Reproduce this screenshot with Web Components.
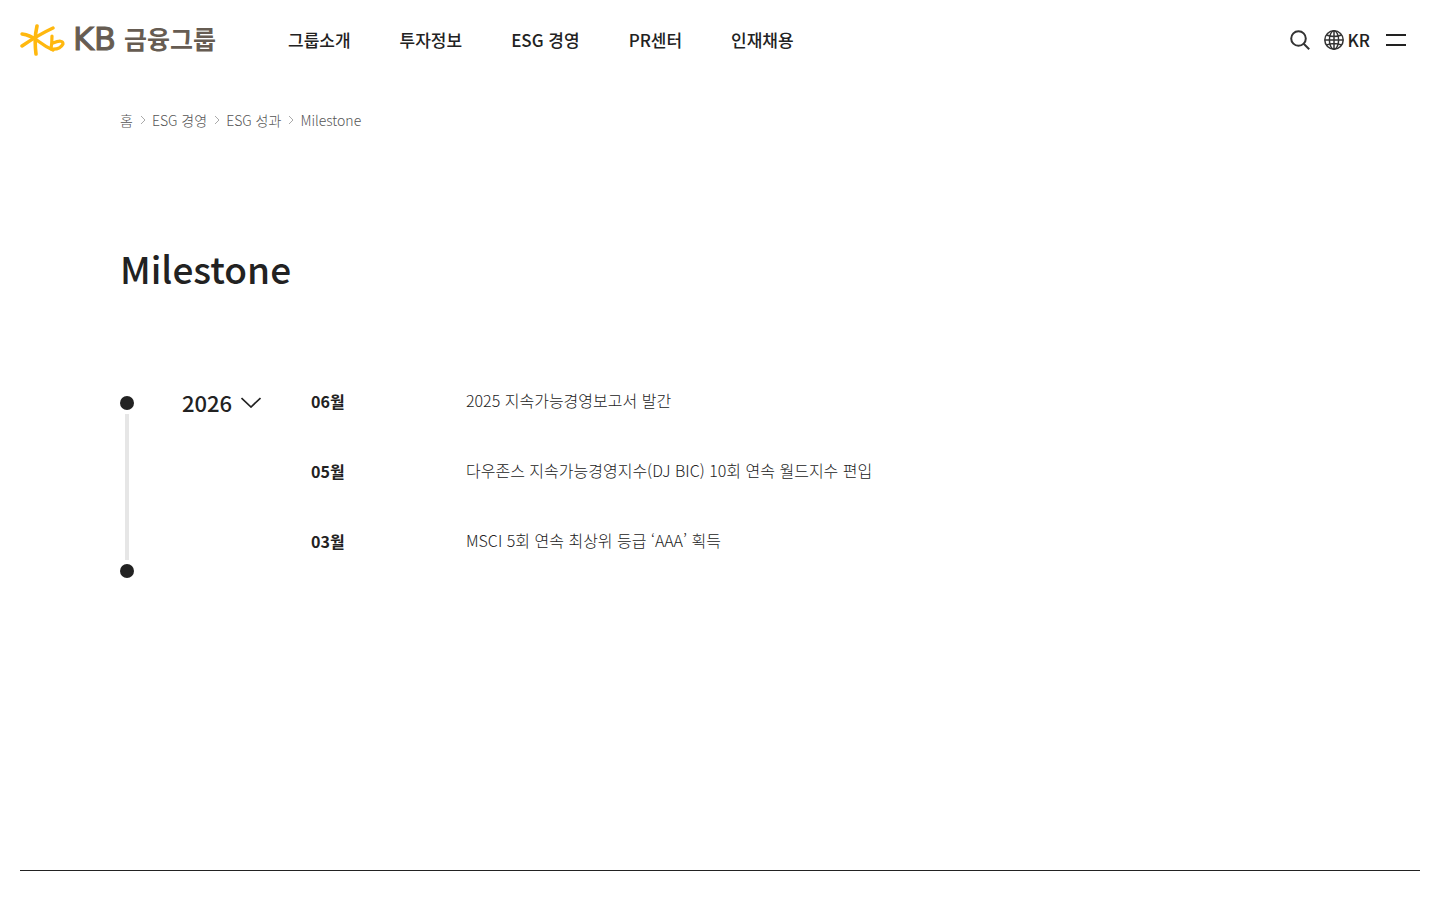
<!DOCTYPE html>
<html lang="ko">
<head>
<meta charset="utf-8">
<meta name="viewport" content="width=device-width, initial-scale=1">
<title>Milestone | KB금융그룹</title>
<style>
  body { margin: 0; background: #fff; color: #222; font-family: "Noto Sans CJK KR", "Noto Sans", sans-serif; }
</style>
</head>
<body>
<kb-header>
  <kb-logo slot="logo"></kb-logo>
  <kb-nav-link href="#group">그룹소개</kb-nav-link>
  <kb-nav-link href="#ir">투자정보</kb-nav-link>
  <kb-nav-link href="#esg">ESG 경영</kb-nav-link>
  <kb-nav-link href="#pr">PR센터</kb-nav-link>
  <kb-nav-link href="#career">인재채용</kb-nav-link>
</kb-header>
<kb-page heading="Milestone">
  <kb-breadcrumb slot="path">
    <kb-crumb href="#home">홈</kb-crumb>
    <kb-crumb href="#esg">ESG 경영</kb-crumb>
    <kb-crumb href="#result">ESG 성과</kb-crumb>
    <kb-crumb href="#milestone">Milestone</kb-crumb>
  </kb-breadcrumb>
  <kb-timeline year="2026">
    <kb-event month="06월">2025 지속가능경영보고서 발간</kb-event>
    <kb-event month="05월">다우존스 지속가능경영지수(DJ BIC) 10회 연속 월드지수 편입</kb-event>
    <kb-event month="03월">MSCI 5회 연속 최상위 등급 ‘AAA’ 획득</kb-event>
  </kb-timeline>
</kb-page>
<kb-footer></kb-footer>
<script>
  const define = (name, markup, setup) => {
    const template = document.createElement('template');
    template.innerHTML = markup;
    customElements.define(name, class extends HTMLElement {
      constructor() {
        super();
        this.attachShadow({ mode: 'open' }).append(template.content.cloneNode(true));
      }
      connectedCallback() { if (setup) setup(this, this.shadowRoot); }
    });
  };

  define('kb-logo', `
    <style>
      :host { display: block; width: 196px; }
      a { display: flex; align-items: flex-start; color: #665c52; text-decoration: none; line-height: 32px; white-space: nowrap; }
      svg { width: 46px; height: 32px; margin-right: 7px; }
      .kb { font-family: "DejaVu Sans", sans-serif; font-size: 32px; line-height: 30px; margin-right: 8px; -webkit-text-stroke: 1px #665c52; }
      .ko { font-family: "Noto Sans CJK KR", sans-serif; font-size: 25px; font-weight: 700; line-height: 28px; }
    </style>
    <a href="#home">
      <svg viewBox="0 0 46 32" fill="none" stroke="#ffb80f" stroke-linecap="round" stroke-linejoin="round" aria-hidden="true">
        <path d="M17 2Q14 14 16 30" stroke-width="3.6"/>
        <path d="M2 10Q10 11 18 17Q26 23 33 26" stroke-width="3.4"/>
        <path d="M33 4Q18 11 2 22" stroke-width="3.4"/>
        <path d="M32 12Q32 19 31 25Q40 26 43 20Q43 15 33 19" stroke-width="3.2"/>
      </svg>
      <span class="kb">KB</span><span class="ko">금융그룹</span>
    </a>`);

  define('kb-nav-link', `
    <style>
      :host { display: block; }
      a { color: #222; text-decoration: none; font-size: 17px; font-weight: 500; line-height: 24px; white-space: nowrap; }
    </style>
    <a><slot></slot></a>`,
    (host, root) => root.querySelector('a').setAttribute('href', host.getAttribute('href')));

  define('kb-header', `
    <style>
      :host { display: block; }
      header { display: flex; align-items: center; height: 80px; padding: 0 34px 0 20px; }
      nav { display: flex; gap: 49px; margin-left: 72px; }
      .tools { display: flex; align-items: center; margin-left: auto; }
      button { display: flex; align-items: center; gap: 4px; padding: 0; border: 0; background: none; color: #222; font: 500 17px/24px "Noto Sans CJK KR", sans-serif; cursor: pointer; }
      .lang { margin: 0 16px 0 14px; }
      svg { width: 20px; height: 20px; fill: none; stroke: #333; }
    </style>
    <header>
      <slot name="logo"></slot>
      <nav aria-label="주 메뉴"><slot></slot></nav>
      <div class="tools">
        <button aria-label="검색"><svg viewBox="0 0 20 20" stroke-width="2"><circle cx="8.5" cy="8.5" r="7.3"/><path d="M13.7 13.7L19.2 19.2"/></svg></button>
        <button class="lang"><svg viewBox="0 0 20 20" stroke-width="1.5"><circle cx="10" cy="10" r="9.2"/><ellipse cx="10" cy="10" rx="4.6" ry="9.2"/><path d="M10 1V19M1 10H19M2.5 5Q10 8 17.5 5M2.5 15Q10 12 17.5 15"/></svg>KR</button>
        <button aria-label="전체 메뉴"><svg viewBox="0 0 20 20" stroke-width="2"><path d="M0 5H20M0 15H20" stroke="#222"/></svg></button>
      </div>
    </header>`);

  define('kb-crumb', `
    <style>
      :host { display: flex; align-items: center; }
      a { color: #555; text-decoration: none; font-size: 14px; font-weight: 300; line-height: 20px; white-space: nowrap; }
      svg { width: 6px; height: 10px; margin: 0 6px 0 7px; fill: none; stroke: #aaa; }
      :host(:last-child) svg { display: none; }
    </style>
    <a><slot></slot></a><svg viewBox="0 0 6 10" aria-hidden="true"><path d="M1 1L5 5L1 9"/></svg>`,
    (host, root) => root.querySelector('a').setAttribute('href', host.getAttribute('href')));

  define('kb-breadcrumb', `
    <style>
      :host { display: block; }
      nav { display: flex; }
    </style>
    <nav aria-label="현재 위치"><slot></slot></nav>`);

  define('kb-page', `
    <style>
      :host { display: block; }
      main { padding: 30px 120px 292px; }
      h1 { margin: 110px 0 88px; font-size: 37px; font-weight: 500; line-height: 56px; }
    </style>
    <main><slot name="path"></slot><h1></h1><slot></slot></main>`,
    (host, root) => { root.querySelector('h1').textContent = host.getAttribute('heading'); });

  define('kb-timeline', `
    <style>
      :host { display: block; }
      section { display: flex; }
      .rail { display: flex; flex-direction: column; align-items: center; gap: 4px; width: 14px; margin: 12px 48px 0 0; }
      .dot { width: 14px; height: 14px; border-radius: 50%; background: #222; }
      .line { flex: 1; width: 4px; background: #e6e6e6; }
      .year { width: 129px; padding: 6px 0; }
      h2 { margin: 0; font-size: 22px; }
      button { display: flex; align-items: center; gap: 9px; padding: 0; border: 0; background: none; color: #222; font: 500 22px/24px "Noto Sans CJK KR", sans-serif; cursor: pointer; }
      svg { width: 20px; height: 12px; fill: none; stroke: #222; stroke-width: 1.7; }
      .events { flex: 1; display: flex; flex-direction: column; gap: 34px; padding-bottom: 18px; }
    </style>
    <section>
      <div class="rail"><span class="dot"></span><span class="line"></span><span class="dot"></span></div>
      <div class="year"><h2><button aria-expanded="true"><span></span><svg viewBox="0 0 20 12" aria-hidden="true"><path d="M0.5 2L10 11L19.5 2"/></svg></button></h2></div>
      <div class="events"><slot></slot></div>
    </section>`,
    (host, root) => { root.querySelector('button span').textContent = host.getAttribute('year'); });

  define('kb-event', `
    <style>
      :host { display: flex; min-height: 36px; }
      h3 { flex: none; width: 155px; margin: 0; font-size: 16px; font-weight: 700; line-height: 34px; }
      p { margin: 0; font-size: 16px; font-weight: 300; line-height: 32px; }
    </style>
    <h3></h3><p><slot></slot></p>`,
    (host, root) => { root.querySelector('h3').textContent = host.getAttribute('month'); });

  define('kb-footer', `
    <style>
      :host { display: block; }
      footer { margin: 0 20px; height: 29px; border-top: 1px solid #222; }
    </style>
    <footer></footer>`);
</script>
</body>
</html>
